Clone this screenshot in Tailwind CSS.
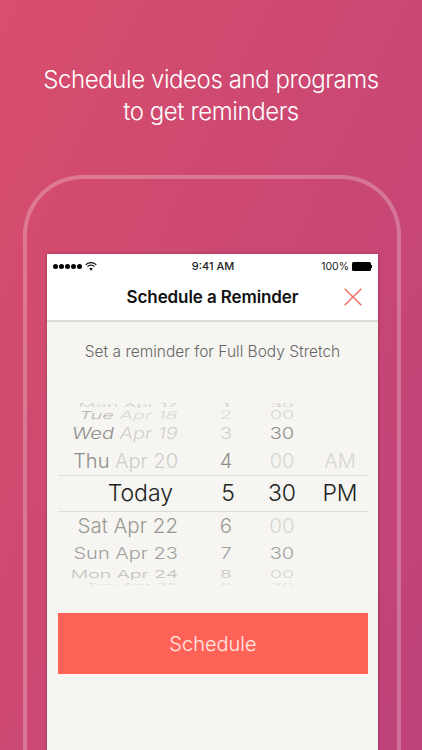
<!DOCTYPE html>
<html lang="en">

<head>
    <meta charset="UTF-8">
    <meta name="viewport" content="width=device-width, initial-scale=1.0">
    <title>Schedule a Reminder</title>
    <script src="https://cdn.jsdelivr.net/npm/@tailwindcss/browser@4"></script>
</head>

<body>
    <div class="h-[750px] w-[422px] overflow-hidden bg-linear-[115deg] from-[#d84e6c] to-[#be427a] font-['Inter',sans-serif]">
        <h1 class="pt-[64px] text-center text-[24px] leading-[32px] font-light tracking-[-0.42px] text-white">Schedule videos and programs<br>to get reminders</h1>

        <!-- phone outline -->
        <div class="mt-[47px] ml-[23px] h-[575px] w-[378px] rounded-t-[60px] border-4 border-b-0 border-white/25 pt-[75px] pl-[20px]">
            <div class="h-[500px] w-[331px] bg-[#f6f5f1] shadow-[0_0_3px_rgba(0,0,0,0.25)]">
                <div class="bg-white">
                    <div class="flex h-[24px] items-center justify-between px-[6px] text-[11px] font-medium text-[#222]">
                        <div class="flex items-center gap-[3px]">
                            <div class="flex gap-[1px]">
                                <i class="size-[5px] rounded-full bg-black"></i>
                                <i class="size-[5px] rounded-full bg-black"></i>
                                <i class="size-[5px] rounded-full bg-black"></i>
                                <i class="size-[5px] rounded-full bg-black"></i>
                                <i class="size-[5px] rounded-full bg-black"></i>
                            </div>
                            <svg class="h-[9px] w-[12px]" viewBox="0 0 12 9" fill="none" stroke="#111" stroke-width="1.2">
                                <path d="M.7 2.8a7.4 7.4 0 0 1 10.6 0" />
                                <path d="M2.5 4.7a4.8 4.8 0 0 1 7 0" />
                                <path d="M6 8.8 4.2 6.6a2.5 2.5 0 0 1 3.6 0z" fill="#111" stroke="none" />
                            </svg>
                        </div>
                        <span class="ml-[8px]">9:41 AM</span>
                        <div class="flex items-center gap-[3px] font-normal">
                            <span class="pt-[1px] text-[10.5px]">100%</span>
                            <div class="flex items-center">
                                <i class="h-[9px] w-[19px] rounded-[1.5px] bg-black"></i>
                                <i class="h-[3px] w-[1px] bg-black"></i>
                            </div>
                        </div>
                    </div>
                    <div class="relative flex h-[44px] items-center justify-center border-b-2 border-[#dddcd9] pb-[2px] text-[17px] font-semibold tracking-[-0.1px] text-[#111]">
                        Schedule a Reminder
                        <svg class="absolute top-[10px] right-[16px] size-[18px]" viewBox="0 0 18 18" stroke="#f2685f" stroke-width="1.4" fill="none">
                            <path d="M.7.7l16.6 16.6M17.3.7.7 17.3" />
                        </svg>
                    </div>
                </div>

                <p class="pt-[20px] text-center text-[15.5px] leading-[20px] font-light text-[#666]">Set a reminder for Full Body Stretch</p>

                <!-- date/time wheel -->
                <div class="relative mt-[39px] h-[184px] overflow-hidden font-light">
                    <div class="grid h-[8px] grid-cols-[131px_78px_52px_64px] items-center text-[19px] leading-[8px] text-[#cfcecb]">
                        <span class="scale-y-[0.25] text-right">Mon Apr 17</span>
                        <span class="scale-y-[0.25] pl-[18px] text-center">1</span>
                        <span class="scale-y-[0.25] text-center">30</span>
                    </div>
                    <div class="grid h-[13px] grid-cols-[131px_78px_52px_64px] items-center text-[20px] leading-[13px]">
                        <span class="scale-y-[0.55] -skew-x-[10deg] text-right text-[#dad9d6]"><span class="text-[#b5b4b1]">Tue</span> Apr 18</span>
                        <span class="scale-y-[0.55] pl-[18px] text-center text-[#dad9d6]">2</span>
                        <span class="scale-y-[0.55] text-center text-[#dad9d6]">00</span>
                    </div>
                    <div class="grid h-[26px] grid-cols-[131px_78px_52px_64px] items-center pb-[3px] text-[20px] leading-[23px]">
                        <span class="scale-y-[0.82] -skew-x-[8deg] text-right text-[#d0cfcc]"><span class="text-[#8f8e8b]">Wed</span> Apr 19</span>
                        <span class="scale-y-[0.82] pl-[18px] text-center text-[#d0cfcc]">3</span>
                        <span class="scale-y-[0.82] text-center text-[#8f8e8b]">30</span>
                    </div>
                    <div class="grid h-[28px] grid-cols-[131px_78px_52px_64px] items-center pb-[2px] text-[20px] leading-[26px]">
                        <span class="text-right text-[#cfcecb]"><span class="text-[#8f8e8b]">Thu</span> Apr 20</span>
                        <span class="pl-[18px] text-center text-[#8f8e8b]">4</span>
                        <span class="text-center text-[#d6d5d2]">00</span>
                        <span class="text-center text-[#d6d5d2]">AM</span>
                    </div>
                    <div class="grid h-[37px] grid-cols-[131px_78px_52px_64px] items-center pb-[2px] text-[23px] leading-[35px] text-[#222]">
                        <span class="pr-[5px] text-right">Today</span>
                        <span class="pl-[22px] text-center">5</span>
                        <span class="text-center">30</span>
                        <span class="text-center">PM</span>
                    </div>
                    <div class="grid h-[28px] grid-cols-[131px_78px_52px_64px] items-center pb-[2px] text-[20.5px] leading-[26px] text-[#9a9996]">
                        <span class="text-right">Sat Apr 22</span>
                        <span class="pl-[18px] text-center">6</span>
                        <span class="text-center text-[#d6d5d2]">00</span>
                    </div>
                    <div class="grid h-[26px] grid-cols-[131px_78px_52px_64px] items-center pb-[2px] text-[20px] leading-[24px] text-[#a09fa0]">
                        <span class="scale-y-[0.82] text-right">Sun Apr 23</span>
                        <span class="scale-y-[0.82] pl-[18px] text-center">7</span>
                        <span class="scale-y-[0.82] text-center">30</span>
                    </div>
                    <div class="grid h-[15px] grid-cols-[131px_78px_52px_64px] items-center text-[19.5px] leading-[15px] text-[#c2c1be]">
                        <span class="scale-y-[0.55] text-right">Mon Apr 24</span>
                        <span class="scale-y-[0.55] pl-[18px] text-center">8</span>
                        <span class="scale-y-[0.55] text-center text-[#d6d5d2]">00</span>
                    </div>
                    <div class="grid h-[6px] grid-cols-[131px_78px_52px_64px] items-center text-[18px] leading-[6px] text-[#d6d5d2]">
                        <span class="scale-y-[0.25] text-right">Tue Apr 25</span>
                        <span class="scale-y-[0.25] pl-[18px] text-center">9</span>
                        <span class="scale-y-[0.25] text-center">30</span>
                    </div>
                    <!-- selection lines -->
                    <div class="absolute top-[74px] left-[11px] h-[37px] w-[310px] border-y border-[#dedddA]"></div>
                </div>

                <button class="mx-[11px] mt-[28px] block h-[61px] w-[310px] bg-[#ff6256] text-[20px] font-light text-white/85">Schedule</button>
            </div>
        </div>
    </div>
</body>

</html>
